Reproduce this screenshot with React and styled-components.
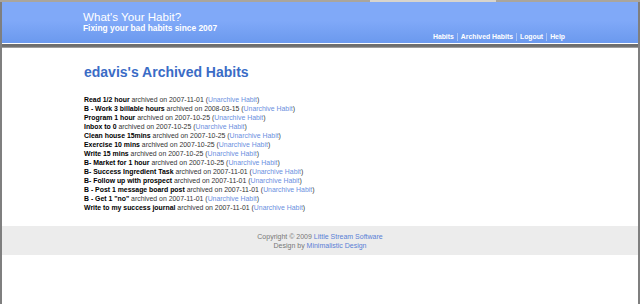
import React from "react";
import styled, { createGlobalStyle } from "styled-components";

const Global = createGlobalStyle`
  html, body { margin: 0; padding: 0; background: #fff; }
  body { font-family: "Liberation Sans", Arial, sans-serif; }
`;

const Frame = styled.div`
  width: 640px;
  height: 302px;
  box-sizing: border-box;
  border-left: 2px solid #7f7f7f;
  border-right: 2px solid #7f7f7f;
  display: flex;
  flex-direction: column;
  overflow: hidden;
  background: #fff;
`;

const TopStrip = styled.div`
  height: 2px;
  background: #aaa59c;
  display: flex;
  padding-left: 370px;
`;

const TabPiece = styled.div`
  width: 126px;
  background: #d8d4cc;
`;

const Header = styled.header`
  height: 41px;
  background: linear-gradient(#80a9f8 0%, #80a9f8 45%, #6b99ee 100%);
  display: flex;
  flex-direction: column;
  padding-left: 81px;
  padding-right: 70px;
  color: #fff;
`;

const Title = styled.div`
  font-size: 11.6px;
  margin-top: 8px;
  line-height: 13px;
`;

const Subtitle = styled.div`
  font-size: 8.4px;
  font-weight: bold;
  line-height: 11px;
`;

const Nav = styled.nav`
  display: flex;
  justify-content: flex-end;
  align-items: center;
  font-size: 6.85px;
  font-weight: bold;
  margin-top: -1px;
`;

const NavLink = styled.span`
  padding: 0 3px;
  border-left: ${(p) => (p.$first ? "none" : "1px solid #a9c3f5")};
  line-height: 8px;
`;

const HeaderRule = styled.div`
  height: 4px;
  border-top: 1px solid #fff;
  background: linear-gradient(#6e6e6e 0%, #6e6e6e 60%, #b5b5b5 100%);
`;

const Main = styled.main`
  padding: 14px 0 0 82px;
  flex: 0 0 auto;
  height: 164px;
`;

const PageTitle = styled.h1`
  margin: 0 0 13px 0;
  font-size: 14px;
  font-weight: bold;
  color: #3a6cc6;
  line-height: 20px;
`;

const List = styled.div`
  display: flex;
  flex-direction: column;
  font-size: 6.9px;
  line-height: 9px;
  color: #333;
`;

const Row = styled.div`
  white-space: nowrap;
`;

const Name = styled.b`
  color: #000;
`;

const Link = styled.a`
  color: #6b8fe0;
  text-decoration: none;
`;

const Footer = styled.footer`
  height: 29px;
  background: #ececec;
  display: flex;
  flex-direction: column;
  align-items: center;
  justify-content: center;
  font-size: 7px;
  line-height: 9px;
  color: #777;
`;

const FooterLink = styled.a`
  color: #5a80d6;
  text-decoration: none;
`;

const habits = [
  ["Read 1/2 hour", "2007-11-01"],
  ["B - Work 3 billable hours", "2008-03-15"],
  ["Program 1 hour", "2007-10-25"],
  ["Inbox to 0", "2007-10-25"],
  ["Clean house 15mins", "2007-10-25"],
  ["Exercise 10 mins", "2007-10-25"],
  ["Write 15 mins", "2007-10-25"],
  ["B- Market for 1 hour", "2007-10-25"],
  ["B- Success Ingredient Task", "2007-11-01"],
  ["B- Follow up with prospect", "2007-11-01"],
  ["B - Post 1 message board post", "2007-11-01"],
  ["B - Get 1 \"no\"", "2007-11-01"],
  ["Write to my success journal", "2007-11-01"],
];

export default function App() {
  return (
    <>
      <Global />
      <TopStrip>
        <TabPiece />
      </TopStrip>
      <Frame>
        <Header>
          <Title>What's Your Habit?</Title>
          <Subtitle>Fixing your bad habits since 2007</Subtitle>
          <Nav>
            <NavLink $first>Habits</NavLink>
            <NavLink>Archived Habits</NavLink>
            <NavLink>Logout</NavLink>
            <NavLink>Help</NavLink>
          </Nav>
        </Header>
        <HeaderRule />
        <Main>
          <PageTitle>edavis's Archived Habits</PageTitle>
          <List>
            {habits.map(([n, d]) => (
              <Row key={n}>
                <Name>{n}</Name> archived on {d} (<Link href="#">Unarchive Habit</Link>)
              </Row>
            ))}
          </List>
        </Main>
        <Footer>
          <div>
            Copyright © 2009 <FooterLink href="#">Little Stream Software</FooterLink>
          </div>
          <div>
            Design by <FooterLink href="#">Minimalistic Design</FooterLink>
          </div>
        </Footer>
      </Frame>
    </>
  );
}
